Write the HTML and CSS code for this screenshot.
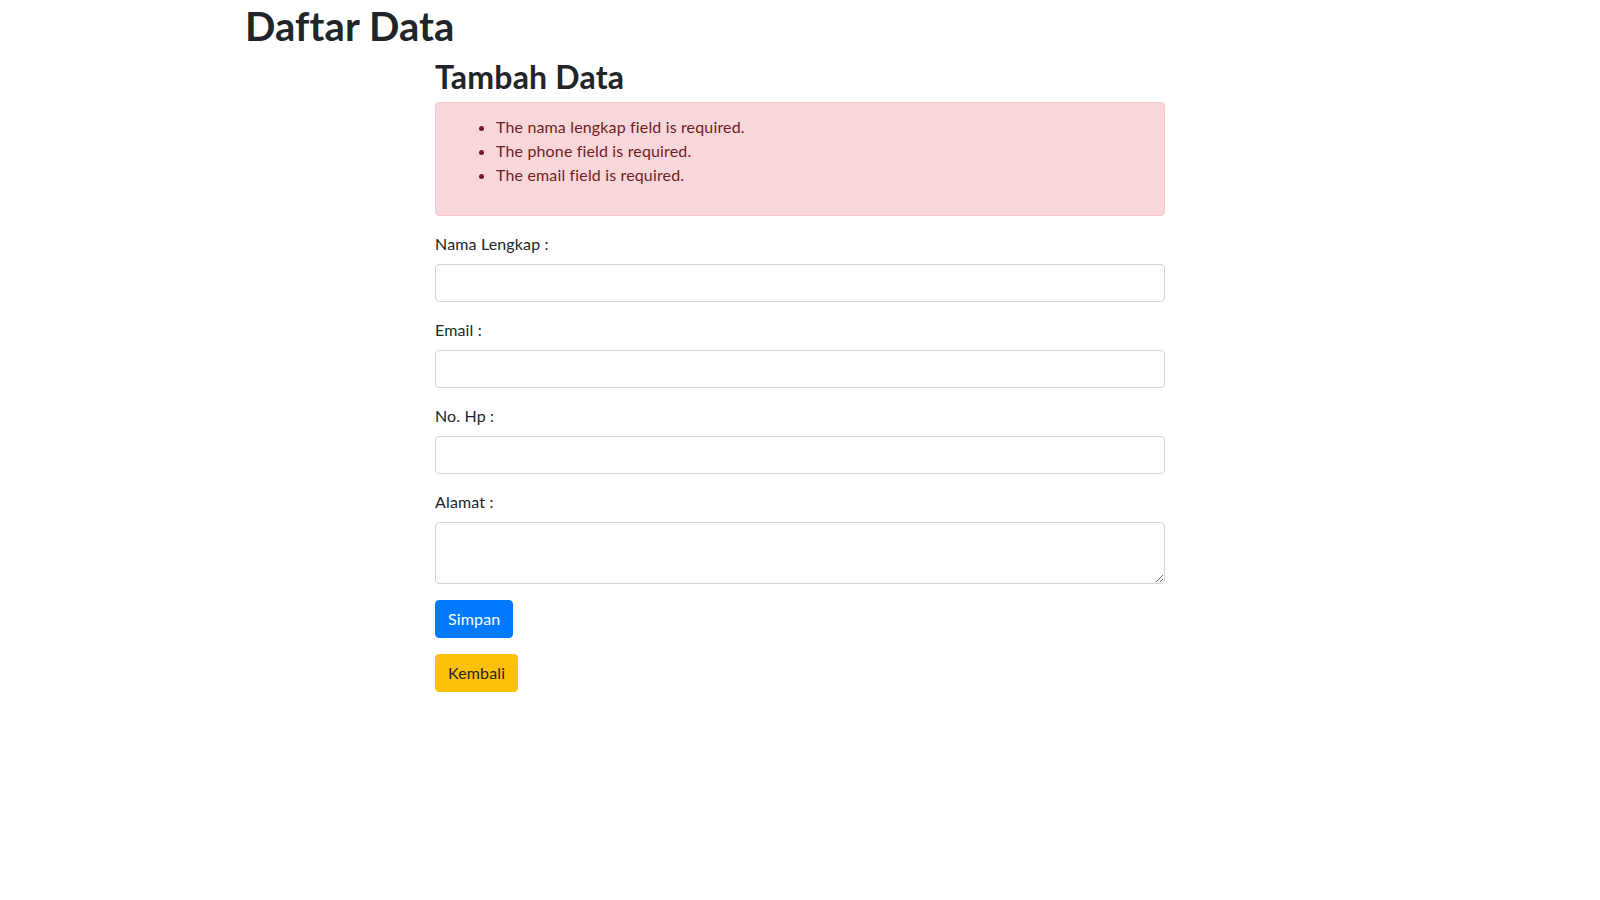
FILE: index.html
```html
<!DOCTYPE html>
<html lang="id">
<head>
<meta charset="utf-8">
<title>Daftar Data</title>
<link rel="stylesheet" href="styles.css">
</head>
<body>
<div class="container">
  <h1 class="page-title">Daftar Data</h1>
  <div class="form-wrap">
    <h2 class="form-title">Tambah Data</h2>
    <div class="alert alert-danger">
      <ul class="error-list">
        <li>The nama lengkap field is required.</li>
        <li>The phone field is required.</li>
        <li>The email field is required.</li>
      </ul>
    </div>
    <form class="data-form">
      <div class="form-group">
        <label class="form-label" for="nama">Nama Lengkap :</label>
        <input class="form-control" type="text" id="nama">
      </div>
      <div class="form-group">
        <label class="form-label" for="email">Email :</label>
        <input class="form-control" type="text" id="email">
      </div>
      <div class="form-group">
        <label class="form-label" for="hp">No. Hp :</label>
        <input class="form-control" type="text" id="hp">
      </div>
      <div class="form-group">
        <label class="form-label" for="alamat">Alamat :</label>
        <textarea class="form-control textarea" id="alamat" rows="2"></textarea>
      </div>
      <div class="btn-row">
        <button type="button" class="btn btn-primary">Simpan</button>
      </div>
    </form>
    <div class="btn-row">
      <a class="btn btn-warning">Kembali</a>
    </div>
  </div>
</div>
</body>
</html>
```

FILE: styles.css
```css
* { box-sizing: border-box; }
html, body { margin: 0; padding: 0; }
body {
  font-family: "Lato", "Noto Sans", sans-serif;
  font-size: 16px;
  line-height: 1.5;
  letter-spacing: 0.15px;
  color: #212529;
  background: #fff;
}
.container {
  width: 1140px;
  margin: 0 auto;
  padding: 0 15px;
}
.page-title {
  margin: 0 0 6px;
  padding-top: 2px;
  font-size: 40px;
  font-weight: 700;
  line-height: 48px;
  letter-spacing: 0.1px;
}
.form-wrap {
  width: 730px;
  margin: 0 auto;
}
.form-title {
  margin: 0 0 6px;
  padding-top: 2px;
  font-size: 32px;
  font-weight: 700;
  line-height: 38.4px;
  letter-spacing: 0.2px;
}
.alert {
  padding: 12px 20px;
  border: 1px solid transparent;
  border-radius: 4px;
  margin-bottom: 16px;
}
.alert-danger {
  color: #721c24;
  background: #f8d7da;
  border-color: #f5c6cb;
}
.error-list {
  margin: 0 0 16px;
  padding-left: 40px;
}
.data-form { margin: 0; }
.form-group { margin-bottom: 16px; }
.form-label {
  display: inline-block;
  margin-bottom: 8px;
}
.form-control {
  display: block;
  width: 100%;
  height: 38px;
  padding: 6px 12px;
  font: inherit;
  color: #495057;
  background: #fff;
  border: 1px solid #ced4da;
  border-radius: 4px;
  margin: 0;
}
.textarea {
  height: 62px;
  resize: vertical;
}
.btn-row { margin-bottom: 16px; }
.btn {
  display: inline-block;
  font: inherit;
  line-height: 1.5;
  letter-spacing: 0.15px;
  padding: 6px 12px;
  border: 1px solid transparent;
  border-radius: 4px;
  cursor: pointer;
  text-decoration: none;
}
.btn-primary {
  color: #fff;
  background: #007bff;
  border-color: #007bff;
}
.btn-warning {
  color: #212529;
  background: #ffc107;
  border-color: #ffc107;
}
```
